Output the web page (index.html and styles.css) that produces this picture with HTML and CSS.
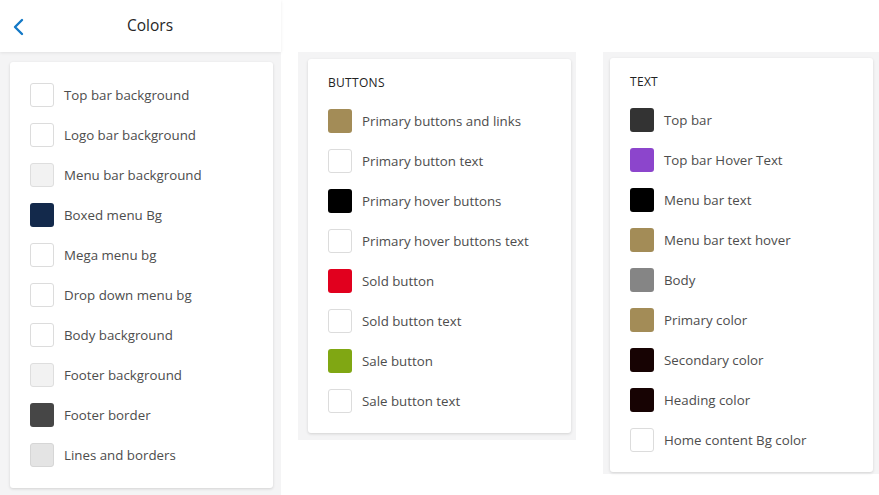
FILE: index.html
```html
<!DOCTYPE html>
<html>
<head>
<meta charset="utf-8">
<link rel="stylesheet" href="styles.css">
</head>
<body>
<div class="page">
  <div class="col col-left">
    <header class="header">
      <svg class="back" width="14" height="18" viewBox="0 0 14 18"><path d="M10 2 L3 9 L10 16" fill="none" stroke="#1479c6" stroke-width="2.4" stroke-linecap="round" stroke-linejoin="round"/></svg>
      <h1 class="title">Colors</h1>
      <span></span>
    </header>
    <div class="panel panel-left">
      <div class="card card-left">
        <div class="row"><span class="sw sw-white"></span><span class="lbl">Top bar background</span></div>
        <div class="row"><span class="sw sw-white"></span><span class="lbl">Logo bar background</span></div>
        <div class="row"><span class="sw sw-light"></span><span class="lbl">Menu bar background</span></div>
        <div class="row"><span class="sw" style="background:#13294b"></span><span class="lbl">Boxed menu Bg</span></div>
        <div class="row"><span class="sw sw-white"></span><span class="lbl">Mega menu bg</span></div>
        <div class="row"><span class="sw sw-white"></span><span class="lbl">Drop down menu bg</span></div>
        <div class="row"><span class="sw sw-white"></span><span class="lbl">Body background</span></div>
        <div class="row"><span class="sw sw-light"></span><span class="lbl">Footer background</span></div>
        <div class="row"><span class="sw" style="background:#464646"></span><span class="lbl">Footer border</span></div>
        <div class="row"><span class="sw sw-lines"></span><span class="lbl">Lines and borders</span></div>
      </div>
    </div>
  </div>
  <div class="col col-mid">
    <div class="panel panel-mid">
      <div class="card card-mid">
        <h2 class="section">BUTTONS</h2>
        <div class="row"><span class="sw" style="background:#a38c57"></span><span class="lbl">Primary buttons and links</span></div>
        <div class="row"><span class="sw sw-white"></span><span class="lbl">Primary button text</span></div>
        <div class="row"><span class="sw" style="background:#000000"></span><span class="lbl">Primary hover buttons</span></div>
        <div class="row"><span class="sw sw-white"></span><span class="lbl">Primary hover buttons text</span></div>
        <div class="row"><span class="sw" style="background:#e1001e"></span><span class="lbl">Sold button</span></div>
        <div class="row"><span class="sw sw-white"></span><span class="lbl">Sold button text</span></div>
        <div class="row"><span class="sw" style="background:#80a713"></span><span class="lbl">Sale button</span></div>
        <div class="row"><span class="sw sw-white"></span><span class="lbl">Sale button text</span></div>
      </div>
    </div>
  </div>
  <div class="col col-right">
    <div class="panel panel-right">
      <div class="card card-right">
        <h2 class="section">TEXT</h2>
        <div class="row"><span class="sw" style="background:#333333"></span><span class="lbl">Top bar</span></div>
        <div class="row"><span class="sw" style="background:#8c45cc"></span><span class="lbl">Top bar Hover Text</span></div>
        <div class="row"><span class="sw" style="background:#000000"></span><span class="lbl">Menu bar text</span></div>
        <div class="row"><span class="sw" style="background:#a38c57"></span><span class="lbl">Menu bar text hover</span></div>
        <div class="row"><span class="sw" style="background:#858585"></span><span class="lbl">Body</span></div>
        <div class="row"><span class="sw" style="background:#a38c57"></span><span class="lbl">Primary color</span></div>
        <div class="row"><span class="sw" style="background:#170303"></span><span class="lbl">Secondary color</span></div>
        <div class="row"><span class="sw" style="background:#170303"></span><span class="lbl">Heading color</span></div>
        <div class="row"><span class="sw sw-white"></span><span class="lbl">Home content Bg color</span></div>
      </div>
    </div>
  </div>
</div>
</body>
</html>
```

FILE: styles.css
```css
* { box-sizing: border-box; }
html, body { margin: 0; padding: 0; background: #ffffff; }
body {
  font-family: "Open Sans", "Noto Sans", sans-serif;
  color: #4d4d4d;
  width: 879px;
  height: 495px;
  overflow: hidden;
}
.page {
  display: flex;
  align-items: flex-start;
  height: 495px;
}
.col { display: flex; flex-direction: column; }
.col-left { width: 281px; height: 495px; }
.col-mid { width: 278px; margin-left: 17px; padding-top: 52px; }
.col-right { width: 276px; margin-left: 27px; padding-top: 52px; }

.header {
  height: 52px;
  display: grid;
  grid-template-columns: 40px 1fr 21px;
  align-items: center;
  background: #fff;
  box-shadow: 0 1px 3px rgba(0,0,0,0.08);
  position: relative;
  z-index: 1;
}
.back { margin-left: 12px; margin-top: 1px; }
.title {
  margin: 0 0 2px 0;
  font-size: 15.5px;
  font-weight: 400;
  color: #262626;
  text-align: center;
}

.panel { background: #f4f4f5; }
.panel-left { flex: 1; padding: 10px 8px 7px 10px; }
.panel-mid { padding: 7px 5px 7px 10px; }
.panel-right { padding: 6px 6px 2px 7px; }

.card {
  background: #fff;
  border-radius: 3px;
  box-shadow: 0 1px 3px rgba(0,0,0,0.14);
  display: flex;
  flex-direction: column;
}
.card-left { padding: 13px 20px 13px 20px; height: 426px; }
.card-mid { padding: 16px 20px 12px 20px; }
.card-right { padding: 16px 20px 12px 20px; }

.section {
  margin: 0 0 10px 0;
  font-size: 12px;
  line-height: 16px;
  font-weight: 400;
  color: #222;
  letter-spacing: 0.3px;
}

.row {
  height: 40px;
  display: flex;
  align-items: center;
  gap: 10px;
  font-size: 13.3px;
}
.lbl { padding-bottom: 0; }
.sw {
  width: 24px;
  height: 24px;
  border-radius: 3px;
  flex: none;
}
.sw-white { background: #fff; border: 1px solid #dcdcdc; }
.sw-light { background: #f2f2f2; border: 1px solid #dedede; }
.sw-lines { background: #e4e4e4; border: 1px solid #d6d6d6; }
```
